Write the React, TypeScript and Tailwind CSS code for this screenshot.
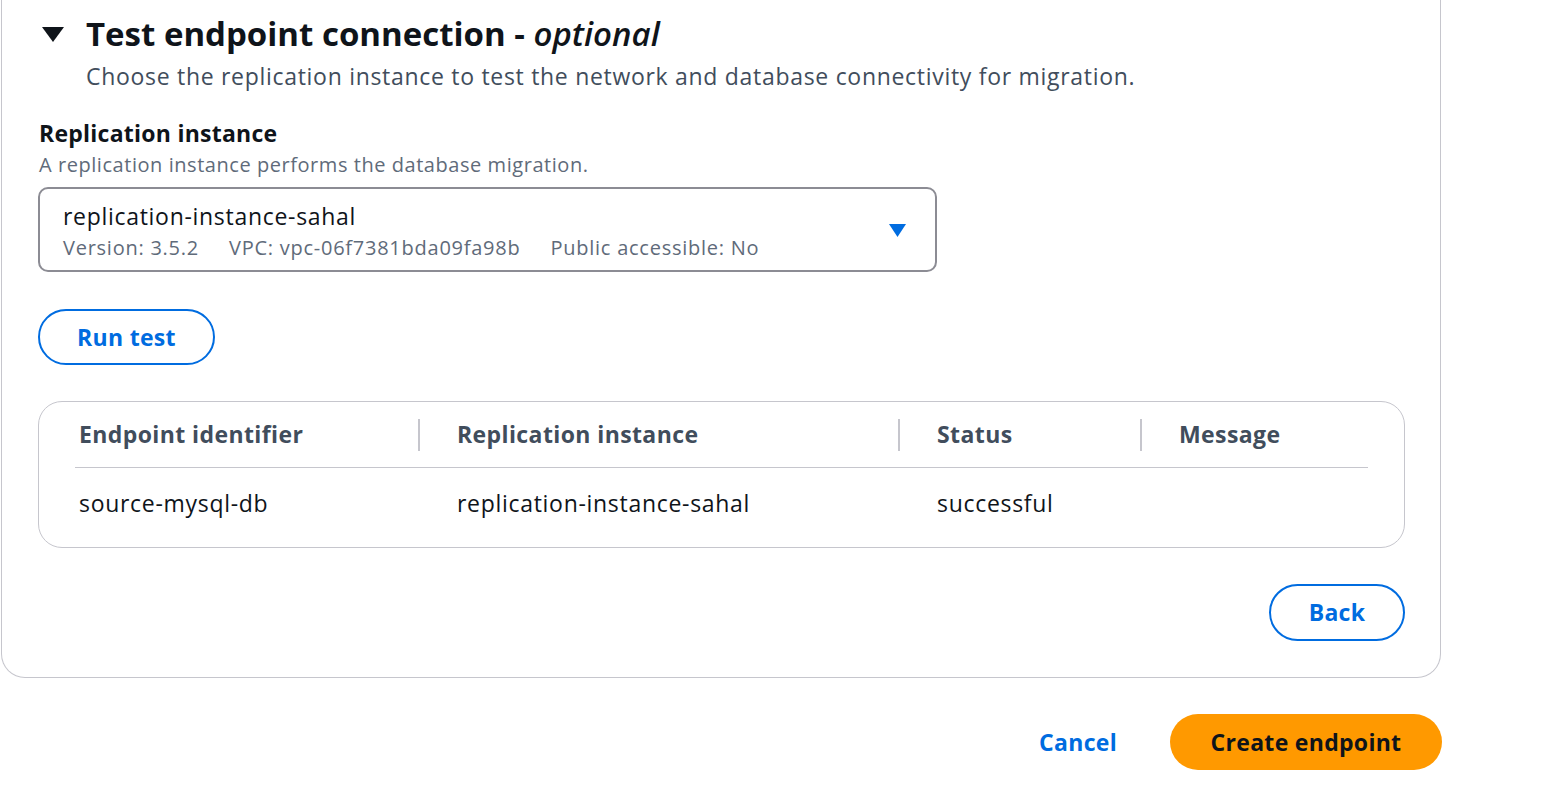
import React from 'react';

const columns = ['Endpoint identifier', 'Replication instance', 'Status', 'Message'];
const rows = [['source-mysql-db', 'replication-instance-sahal', 'successful', '']];
const colWidths = ['w-[343px]', 'w-[480px]', 'w-[242px]', 'flex-1'];

export default function App() {
  return (
    <div className="min-h-screen bg-white font-['Open_Sans',sans-serif] text-[#0f141a]">
      {/* 上部が切れたコンテナ */}
      <div className="ml-[1px] h-[678px] w-[1440px] rounded-b-[24px] border-x border-b border-[#c6c6cd] px-[36px]">
        <div className="flex items-center pt-[13px]">
          <svg width="22" height="15" viewBox="0 0 22 15" className="ml-[4px] mr-[22px]">
            <polygon points="0,0 22,0 11,15" fill="#0f141a" />
          </svg>
          <h2 className="text-[33px] font-bold leading-[42px]">
            Test endpoint connection - <i className="font-semibold">optional</i>
          </h2>
        </div>
        <p className="ml-[48px] mt-[6px] text-[23px] leading-[30px] tracking-[0.7px] text-[#414d5c]">
          Choose the replication instance to test the network and database connectivity for migration.
        </p>

        <div className="mt-[27px] pl-[1px]">
          <div className="text-[23px] font-bold leading-[30px] tracking-[0.25px]">Replication instance</div>
          <div className="mt-[2px] text-[20px] leading-[30px] tracking-[0.55px] text-[#5f6b7a]">
            A replication instance performs the database migration.
          </div>
        </div>

        <div className="mt-[7px] flex h-[85px] w-[899px] items-start justify-between rounded-[10px] border-2 border-[#8c8c94] pl-[23px] pr-[29px] pt-[12px]">
          <div>
            <div className="text-[23px] leading-[30px] tracking-[0.7px]">replication-instance-sahal</div>
            <div className="flex gap-[30px] text-[20px] leading-[34px] tracking-[0.75px] text-[#5f6b7a]">
              <span>Version: 3.5.2</span>
              <span>VPC: vpc-06f7381bda09fa98b</span>
              <span>Public accessible: No</span>
            </div>
          </div>
          <svg width="17" height="13" viewBox="0 0 17 13" className="mt-[23px]">
            <polygon points="0,0 17,0 8.5,13" fill="#006ce0" />
          </svg>
        </div>

        <button className="mt-[37px] flex h-[56px] w-[177px] items-center justify-center rounded-full border-2 border-[#006ce0] text-[23px] font-bold tracking-[0.3px] text-[#006ce0]">
          Run test
        </button>

        <div className="mt-[36px] h-[147px] w-[1367px] rounded-[24px] border border-[#c6c6cd] px-[36px]">
          <div className="flex h-[66px] items-center border-b border-[#c6c6cd]">
            {columns.map((c, i) => (
              <div key={c} className={`${colWidths[i]} flex h-[32px] items-center`}>
                {i > 0 && <span className="mr-[37px] h-[32px] w-[2px] bg-[#c6c6cd]" />}
                <span className={`${i === 0 ? 'pl-[4px]' : ''} text-[23px] font-bold tracking-[0.4px] text-[#414d5c]`}>
                  {c}
                </span>
              </div>
            ))}
          </div>
          {rows.map((r) => (
            <div key={r[0]} className="flex h-[70px] items-center">
              {r.map((cell, i) => (
                <div key={i} className={`${colWidths[i]} ${i === 0 ? 'pl-[4px]' : 'pl-[39px]'} text-[23px] tracking-[0.7px]`}>
                  {cell}
                </div>
              ))}
            </div>
          ))}
        </div>

        <div className="mt-[36px] flex w-[1367px] justify-end">
          <button className="flex h-[57px] w-[136px] items-center justify-center rounded-full border-2 border-[#006ce0] text-[23px] font-bold tracking-[0.3px] text-[#006ce0]">
            Back
          </button>
        </div>
      </div>

      <div className="mt-[36px] flex w-[1442px] items-center justify-end">
        <button className="mr-[53px] text-[23px] font-bold tracking-[0.3px] text-[#006ce0]">Cancel</button>
        <button className="flex h-[56px] w-[272px] items-center justify-center rounded-full bg-[#ff9900] text-[23px] font-bold tracking-[0.3px] text-[#0f141a]">
          Create endpoint
        </button>
      </div>
    </div>
  );
}
